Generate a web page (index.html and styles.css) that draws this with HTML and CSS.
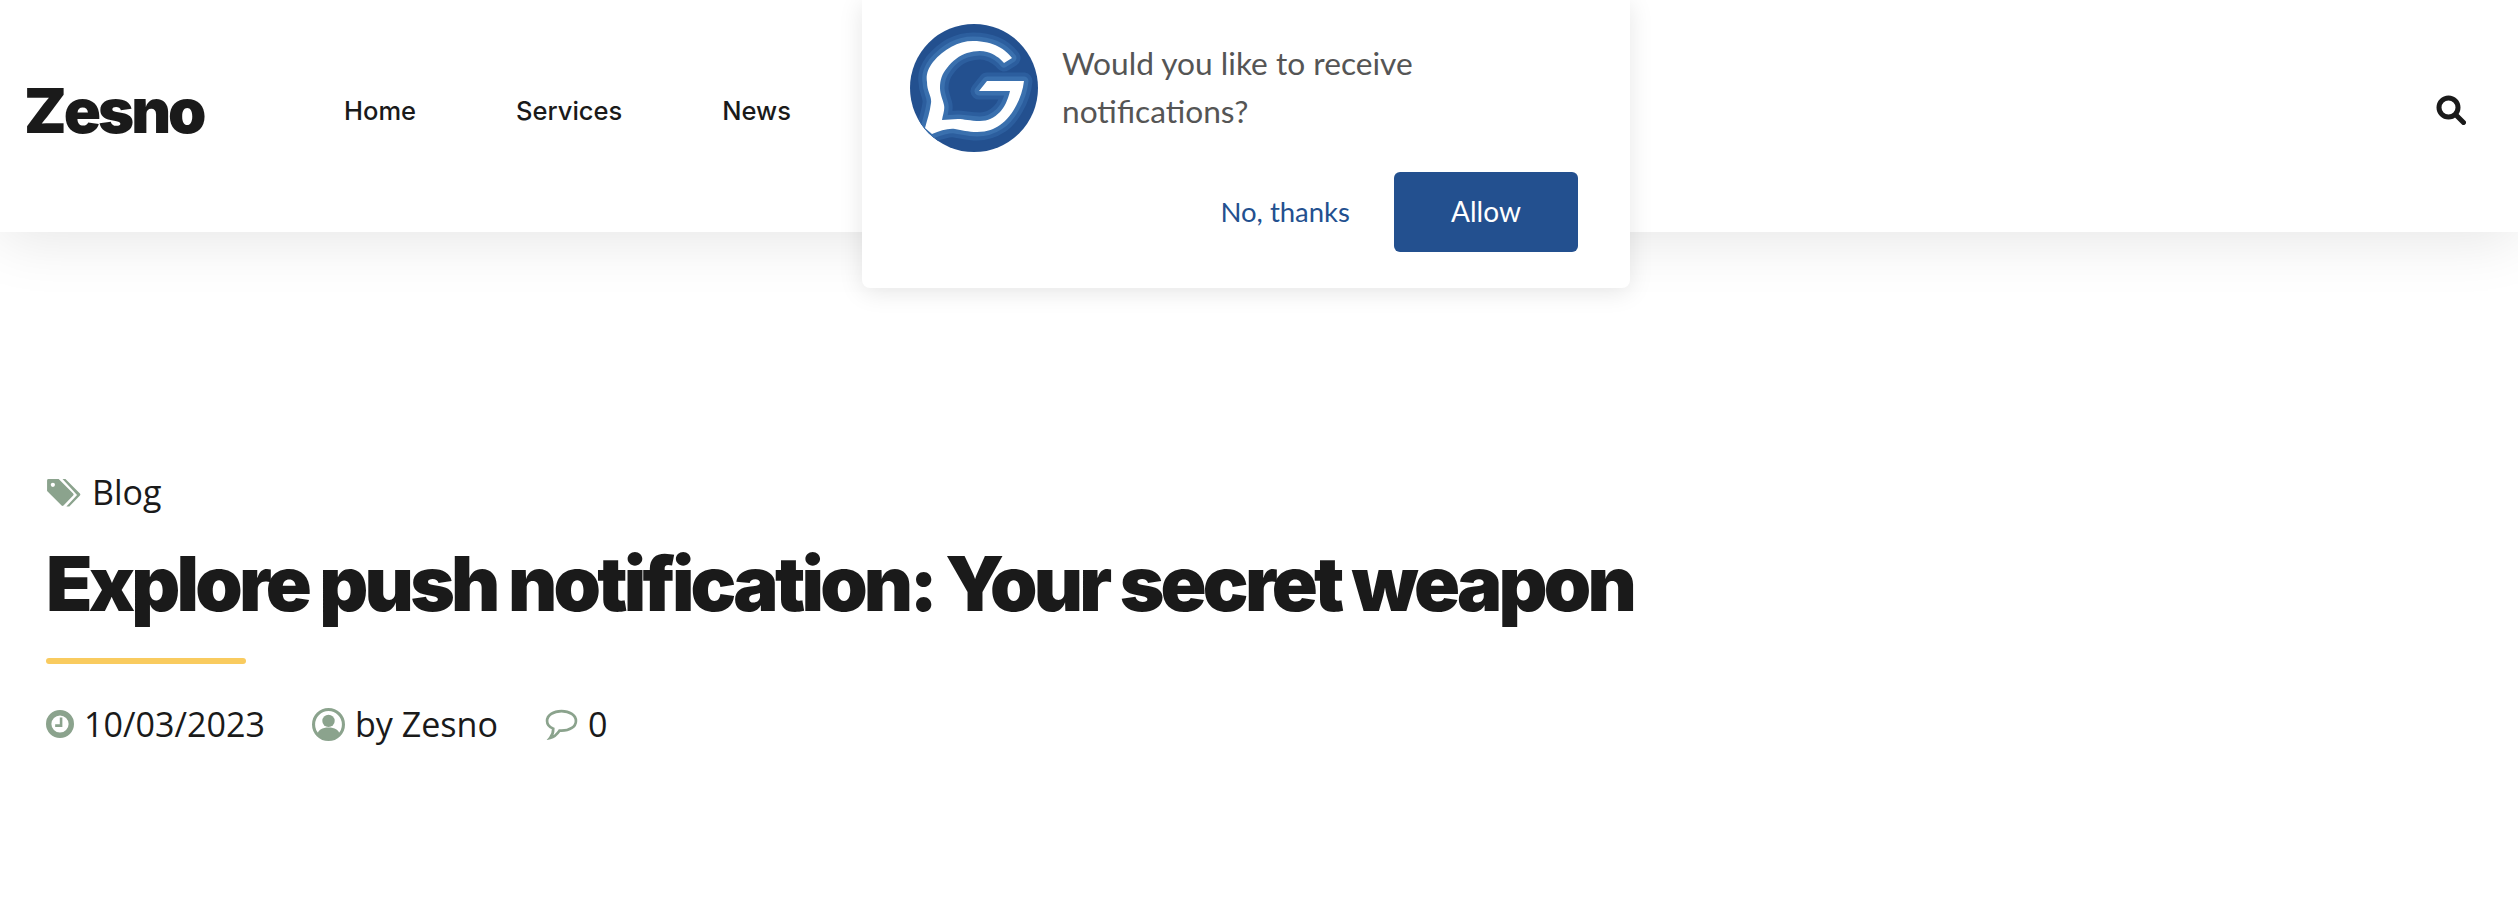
FILE: index.html
```html
<!DOCTYPE html>
<html lang="en">
<head>
    <meta charset="UTF-8">
    <title>Explore push notification: Your secret weapon</title>
    <link rel="stylesheet" href="styles.css">
</head>
<body>
    <header class="site-header">
        <a class="logo">Zesno</a>
        <nav class="menu">
            <a>Home</a>
            <a>Services</a>
            <a>News</a>
        </nav>
        <svg class="search" viewBox="0 0 30 30">
            <circle cx="12.5" cy="12.5" r="9.5" fill="none" stroke="#1a1a1a" stroke-width="5"/>
            <path d="M20 20l7.5 7.5" fill="none" stroke="#1a1a1a" stroke-width="5" stroke-linecap="round"/>
        </svg>
    </header>

    <div class="popup">
        <div class="popup-top">
            <svg class="popup-logo" viewBox="0 0 128 128">
                <defs>
                    <clipPath id="disc"><circle cx="64" cy="64" r="64"/></clipPath>
                    <path id="g-mark" d="M102 34C96 26 84 17 63 17C48 17 34 25 23 38C17 46 16 52 17 58C17 68 22 72 21 79C20 88 17 96 15 104L22 110C30 107 38 104 45 105C52 106 58 108 67 108C78 108 84 105 90 101C100 95 112 76 114 57H77L69 67H100C98 76 94 84 90 88C84 94 78 97 70 97C60 97 54 95 48 95C42 95 38 96 32 96C33 90 35 86 34 81C33 76 30 70 30 64C30 56 32 50 37 44C42 37 50 31 57 29C64 27 71 26 77 28C84 30 90 34 94 39Z"/>
                </defs>
                <circle cx="64" cy="64" r="64" fill="#23508f"/>
                <g clip-path="url(#disc)">
                    <use href="#g-mark" fill="none" stroke="#2c5e9e" stroke-width="17" stroke-linejoin="round"/>
                    <use href="#g-mark" fill="none" stroke="#3a70ae" stroke-width="9" stroke-linejoin="round"/>
                    <use href="#g-mark" fill="#fff"/>
                </g>
            </svg>
            <p class="popup-text">Would you like to receive notifications?</p>
        </div>
        <div class="popup-actions">
            <a class="no-thanks">No, thanks</a>
            <button class="allow">Allow</button>
        </div>
    </div>

    <main class="post-head">
        <div class="category">
            <svg class="tag-icon" viewBox="0 0 36 30">
                <path d="M1 2.500Q1 1 2.500 1H13L28 16Q29 17 28 18L18 28.500Q17 29.500 16 28.500L1 13.500Z" fill="#8ba38d"/>
                <path d="M17 1H20L35 16Q36 17 35 18L24 29.500H21L32 17.500Z" fill="#8ba38d"/>
                <circle cx="7" cy="7" r="2.200" fill="#fff"/>
            </svg>
            <span>Blog</span>
        </div>
        <h1>Explore push notification: Your secret weapon</h1>
        <div class="underline"></div>
        <div class="meta">
            <span class="meta-item">
                <svg class="meta-icon clock" viewBox="0 0 26 26">
                    <circle cx="13" cy="13" r="10.500" fill="none" stroke="#8ba38d" stroke-width="5"/>
                    <path d="M14 7v7.500H8.500" fill="none" stroke="#8ba38d" stroke-width="2.400"/>
                </svg>
                10/03/2023
            </span>
            <span class="meta-item">
                <svg class="meta-icon user" viewBox="0 0 32 32">
                    <circle cx="16" cy="16" r="14.500" fill="none" stroke="#8ba38d" stroke-width="3"/>
                    <circle cx="16" cy="12.500" r="6" fill="#8ba38d"/>
                    <path d="M5 26C6 21 10 19 16 19S26 21 27 26Q16 35 5 26Z" fill="#8ba38d"/>
                </svg>
                by Zesno
            </span>
            <span class="meta-item">
                <svg class="meta-icon bubble" viewBox="0 0 32 30">
                    <path d="M16 2C8 2 2 6 2 11.500C2 15 4.500 17.500 8 19C8 22 7.500 25 5 28C9 27 12 24 14 21H16C24 21 30 17 30 11.500S24 2 16 2Z" fill="none" stroke="#8ba38d" stroke-width="2.600"/>
                </svg>
                0
            </span>
        </div>
    </main>
</body>
</html>
```

FILE: styles.css
```css
body{
    margin: 0;
    padding: 0;
    background-color: #fff;
    color: #1a1a1a;
    font-family: "Open Sans", sans-serif;
    overflow: hidden;
}
.site-header{
    display: flex;
    align-items: center;
    height: 232px;
    box-sizing: border-box;
    padding: 0 52px 12px 24px;
    background-color: #fff;
    box-shadow: 0 8px 56px rgba(0, 0, 0, 0.1);
}
.logo{
    width: 320px;
    font-family: Inter, sans-serif;
    font-size: 61.5px;
    font-weight: 900;
    letter-spacing: -3px;
}
.menu{
    display: flex;
    gap: 100px;
    flex: 1;
    font-family: Inter, sans-serif;
    font-size: 25.5px;
    font-weight: 500;
}
.search{
    width: 30px;
    height: 30px;
}
.popup{
    position: absolute;
    top: 0;
    left: 862px;
    width: 768px;
    height: 288px;
    box-sizing: border-box;
    padding: 24px 52px 0 48px;
    background-color: #fff;
    border-radius: 0 0 8px 8px;
    box-shadow: 0 4px 24px rgba(0, 0, 0, 0.1);
    font-family: Lato, sans-serif;
}
.popup-top{
    display: flex;
    gap: 24px;
}
.popup-logo{
    width: 128px;
    height: 128px;
    flex: none;
}
.popup-text{
    width: 400px;
    margin: 15px 0 0;
    color: #555;
    font-size: 31.7px;
    line-height: 48px;
}
.popup-actions{
    display: flex;
    justify-content: flex-end;
    align-items: center;
    gap: 44px;
    margin-top: 20px;
}
.no-thanks{
    margin-bottom: 2px;
    color: #23508f;
    font-size: 27.5px;
}
.allow{
    width: 184px;
    height: 80px;
    padding-bottom: 3px;
    border: 0;
    border-radius: 6px;
    background-color: #23508f;
    color: #fff;
    font-family: Lato, sans-serif;
    font-size: 28px;
}
.post-head{
    padding: 237px 46px 0;
}
.category{
    display: flex;
    align-items: center;
    gap: 11px;
    font-size: 34px;
    line-height: 46px;
}
.tag-icon{
    width: 35px;
    height: 29px;
}
h1{
    margin: 18px 0 0;
    font-family: Inter, sans-serif;
    font-size: 76px;
    line-height: 100px;
    font-weight: 900;
    letter-spacing: -3.8px;
    white-space: nowrap;
}
.underline{
    width: 200px;
    height: 6px;
    margin-top: 25px;
    border-radius: 3px;
    background-color: #f9cb5f;
}
.meta{
    display: flex;
    gap: 47px;
    margin-top: 37px;
    font-size: 34.1px;
    line-height: 46px;
}
.meta-item{
    display: flex;
    align-items: center;
    gap: 10px;
}
.meta-icon{
    flex: none;
}
.clock{
    width: 28px;
    height: 28px;
}
.user{
    width: 33px;
    height: 33px;
}
.bubble{
    width: 33px;
    height: 31px;
}
```
